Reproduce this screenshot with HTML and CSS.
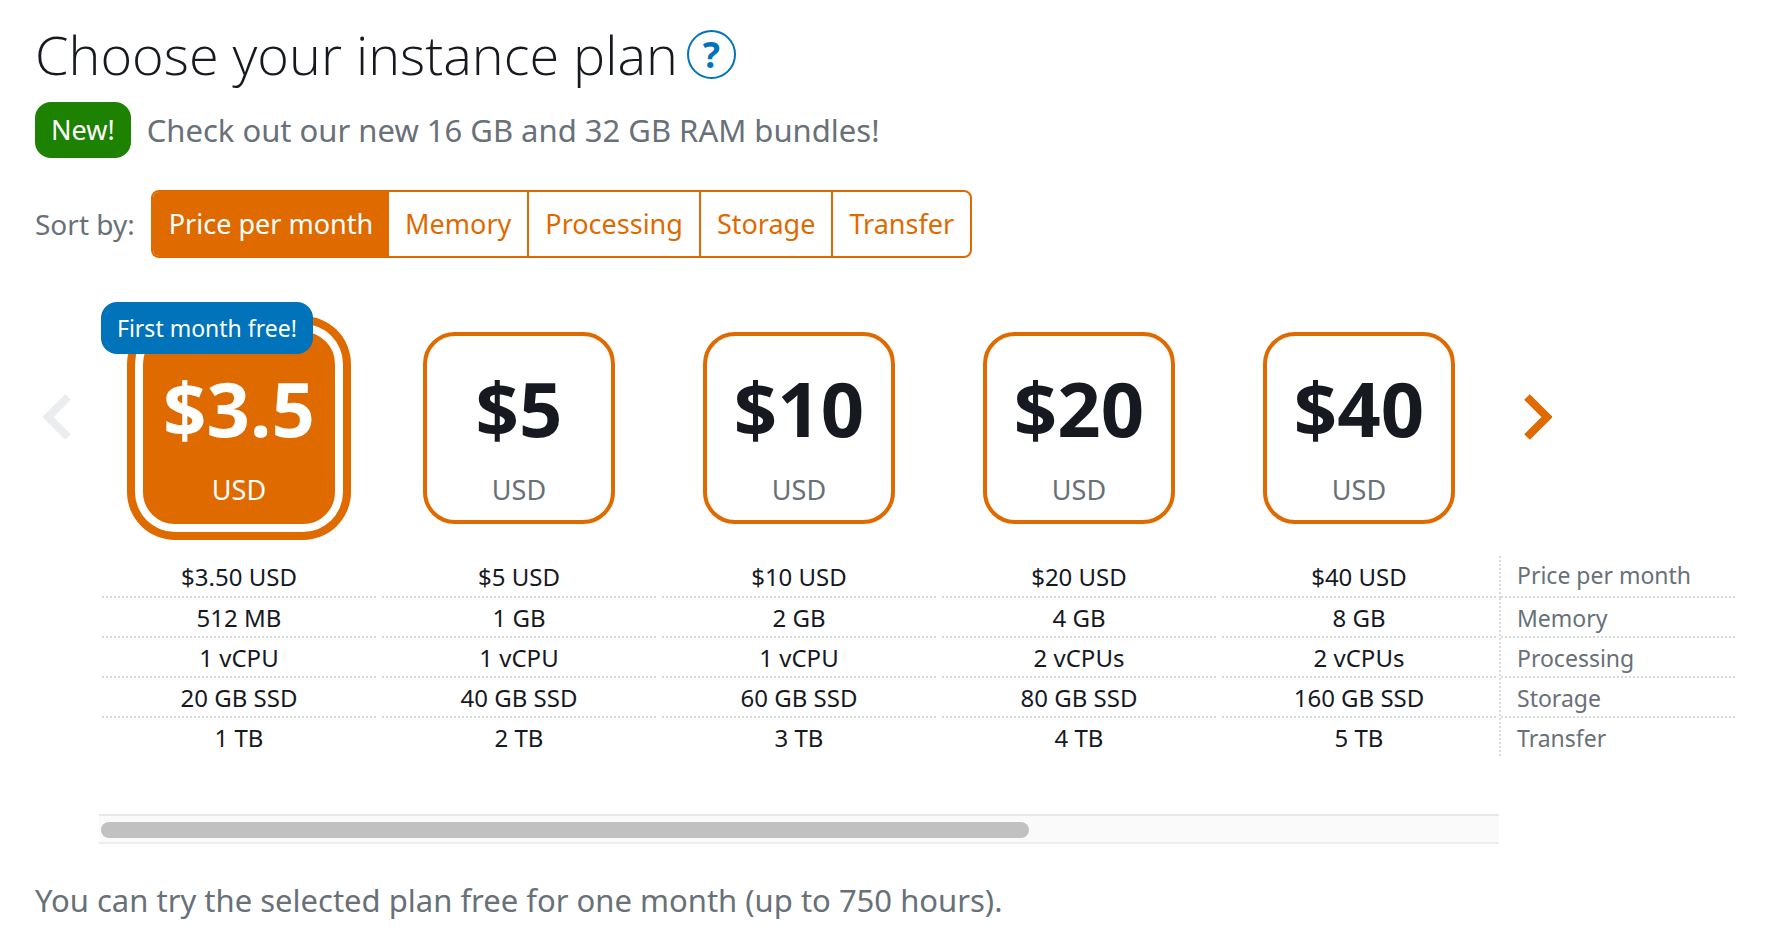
FILE: index.html
```html
<!DOCTYPE html>
<html lang="en">
<head>
    <meta charset="UTF-8">
    <meta name="viewport" content="width=device-width, initial-scale=1.0">
    <title>Choose your instance plan</title>
    <link rel="stylesheet" href="styles.css">
</head>
<body>
    <div class="title-row">
        <h1>Choose your instance plan</h1>
        <button class="help-btn" aria-label="Help">?</button>
    </div>

    <div class="news">
        <span class="badge badge-new">New!</span>
        <p class="note">Check out our new 16 GB and 32 GB RAM bundles!</p>
    </div>

    <!-- Sort -->
    <div class="sort">
        <span class="sort-label" id="sort-label">Sort by:</span>
        <div class="sort-group" role="group" aria-labelledby="sort-label">
            <button class="active">Price per month</button>
            <button>Memory</button>
            <button>Processing</button>
            <button>Storage</button>
            <button>Transfer</button>
        </div>
    </div>

    <!-- Plans -->
    <div class="picker">
        <button class="arrow arrow-left" aria-label="Previous plans" disabled>
            <svg width="28" height="46" viewBox="0 0 28 46"><path d="M25 3 5 23 25 43" /></svg>
        </button>
        <div class="plans">
            <div class="plan">
                <button class="plan-card selected">
                    <span class="price">$3.5</span>
                    <span class="currency">USD</span>
                </button>
                <span class="badge badge-free">First month free!</span>
            </div>
            <div class="plan">
                <button class="plan-card">
                    <span class="price">$5</span>
                    <span class="currency">USD</span>
                </button>
            </div>
            <div class="plan">
                <button class="plan-card">
                    <span class="price">$10</span>
                    <span class="currency">USD</span>
                </button>
            </div>
            <div class="plan">
                <button class="plan-card">
                    <span class="price">$20</span>
                    <span class="currency">USD</span>
                </button>
            </div>
            <div class="plan">
                <button class="plan-card">
                    <span class="price">$40</span>
                    <span class="currency">USD</span>
                </button>
            </div>
        </div>
        <button class="arrow arrow-right" aria-label="Next plans">
            <svg width="28" height="46" viewBox="0 0 28 46"><path d="M3 3 23 23 3 43" /></svg>
        </button>

        <table class="specs">
            <tr>
                <td>$3.50 USD</td>
                <td>$5 USD</td>
                <td>$10 USD</td>
                <td>$20 USD</td>
                <td>$40 USD</td>
                <th scope="row">Price per month</th>
            </tr>
            <tr>
                <td>512 MB</td>
                <td>1 GB</td>
                <td>2 GB</td>
                <td>4 GB</td>
                <td>8 GB</td>
                <th scope="row">Memory</th>
            </tr>
            <tr>
                <td>1 vCPU</td>
                <td>1 vCPU</td>
                <td>1 vCPU</td>
                <td>2 vCPUs</td>
                <td>2 vCPUs</td>
                <th scope="row">Processing</th>
            </tr>
            <tr>
                <td>20 GB SSD</td>
                <td>40 GB SSD</td>
                <td>60 GB SSD</td>
                <td>80 GB SSD</td>
                <td>160 GB SSD</td>
                <th scope="row">Storage</th>
            </tr>
            <tr>
                <td>1 TB</td>
                <td>2 TB</td>
                <td>3 TB</td>
                <td>4 TB</td>
                <td>5 TB</td>
                <th scope="row">Transfer</th>
            </tr>
        </table>

        <div class="scrollbar">
            <div class="scrollbar-thumb"></div>
        </div>
    </div>

    <p class="note">You can try the selected plan free for one month (up to 750 hours).</p>
</body>
</html>
```
FILE: styles.css
```css
* {
    box-sizing: border-box;
}

body {
    margin: 0;
    padding: 18px 37px 20px 35px;
    font-family: "Noto Sans", "Open Sans", sans-serif;
    font-size: 27px;
    background-color: #fff;
    color: #16191f;
}

button {
    margin: 0;
    padding: 0;
    font-family: inherit;
    font-size: inherit;
    background: none;
    border: none;
    cursor: pointer;
}

/* Title */
.title-row {
    display: flex;
    align-items: center;
    gap: 9px;
}

h1 {
    margin: 0;
    font-family: "Open Sans", "Noto Sans", sans-serif;
    font-size: 54px;
    font-weight: 300;
    line-height: 72px;
}

.help-btn {
    width: 49px;
    height: 49px;
    border: 2px solid #0073bb;
    border-radius: 50%;
    color: #0073bb;
    font-size: 36px;
    font-weight: 700;
    line-height: 45px;
}

/* News line */
.news {
    display: flex;
    align-items: center;
    gap: 16px;
    margin-top: 12px;
}

.badge {
    padding: 0 16px;
    border-radius: 16px;
    color: #fff;
}

.badge-new {
    background-color: #1d8102;
    line-height: 56px;
}

.note {
    margin: 0;
    color: #687078;
    font-size: 31px;
    line-height: 44px;
}

/* Sort */
.sort {
    display: flex;
    align-items: center;
    gap: 16px;
    margin-top: 32px;
}

.sort-label {
    color: #687078;
    font-size: 28px;
}

.sort-group {
    display: flex;
    border: 2px solid #df6a00;
    border-radius: 8px;
    overflow: hidden;
}

.sort-group button {
    padding: 0 16px;
    color: #df6a00;
    line-height: 64px;
}

.sort-group button + button {
    border-left: 2px solid #df6a00;
}

.sort-group .active {
    background-color: #df6a00;
    color: #fff;
}

.sort-group .active + button {
    border-left: none;
}

/* Plans */
.picker {
    display: grid;
    grid-template-columns: 64px minmax(0, 1fr) 238px;
    margin: 44px 0 34px;
}

.arrow {
    display: flex;
    align-items: center;
    padding: 0 8px;
    color: #df6a00;
}

.arrow-right {
    padding: 0 25px;
}

.arrow:disabled {
    color: #eaeded;
    cursor: default;
}

.arrow path {
    fill: none;
    stroke: currentColor;
    stroke-width: 8;
}

.plans {
    display: grid;
    grid-template-columns: repeat(5, 1fr);
    padding: 30px 0 8px;
}

.plan {
    position: relative;
    display: flex;
    justify-content: center;
}

.plan-card {
    display: flex;
    flex-direction: column;
    align-items: center;
    gap: 18px;
    width: 192px;
    padding: 28px 0 10px;
    border: 4px solid #df6a00;
    border-radius: 32px;
    color: #16191f;
}

.price {
    font-size: 76px;
    font-weight: 700;
    line-height: 88px;
}

.currency {
    color: #687078;
    line-height: 40px;
}

.selected {
    background-color: #df6a00;
    box-shadow: 0 0 0 8px #fff, 0 0 0 16px #df6a00;
    color: #fff;
}

.selected .currency {
    color: #fff;
}

.badge-free {
    position: absolute;
    top: -30px;
    left: 2px;
    background-color: #0073bb;
    font-size: 23px;
    line-height: 52px;
    white-space: nowrap;
}

/* Specs */
.specs {
    grid-column: 2 / 4;
    width: 100%;
    margin-top: 24px;
    table-layout: fixed;
    border-collapse: collapse;
    font-size: 24px;
    line-height: 40px;
}

.specs td,
.specs th {
    padding: 0 3px;
    background: repeating-linear-gradient(90deg, #d5dbdb 0 2px, transparent 2px 4px) bottom / 100% 2px no-repeat content-box;
    text-align: center;
}

.specs th {
    width: 238px;
    padding: 0 0 0 18px;
    background:
        repeating-linear-gradient(#d5dbdb 0 2px, transparent 2px 4px) left / 2px 100% no-repeat,
        repeating-linear-gradient(90deg, transparent 0 2px, #d5dbdb 2px 4px) bottom / 100% 2px no-repeat;
    color: #687078;
    font-size: 23px;
    font-weight: 400;
    text-align: left;
}

.specs tr:first-child {
    height: 42px;
    line-height: 40px;
}

.specs tr:first-child th {
    line-height: 38px;
    vertical-align: top;
}

.specs tr:last-child td {
    background: none;
}

.specs tr:last-child th {
    background: repeating-linear-gradient(#d5dbdb 0 2px, transparent 2px 4px) left / 2px 100% no-repeat;
}

/* Scrollbar */
.scrollbar {
    grid-column: 2;
    margin-top: 56px;
    padding: 6px 2px 4px;
    background-color: #fafafa;
    border-top: 2px solid #e8e8e8;
    border-bottom: 2px solid #ededed;
}

.scrollbar-thumb {
    width: 66.5%;
    height: 16px;
    border-radius: 8px;
    background-color: #c1c1c1;
}
```
